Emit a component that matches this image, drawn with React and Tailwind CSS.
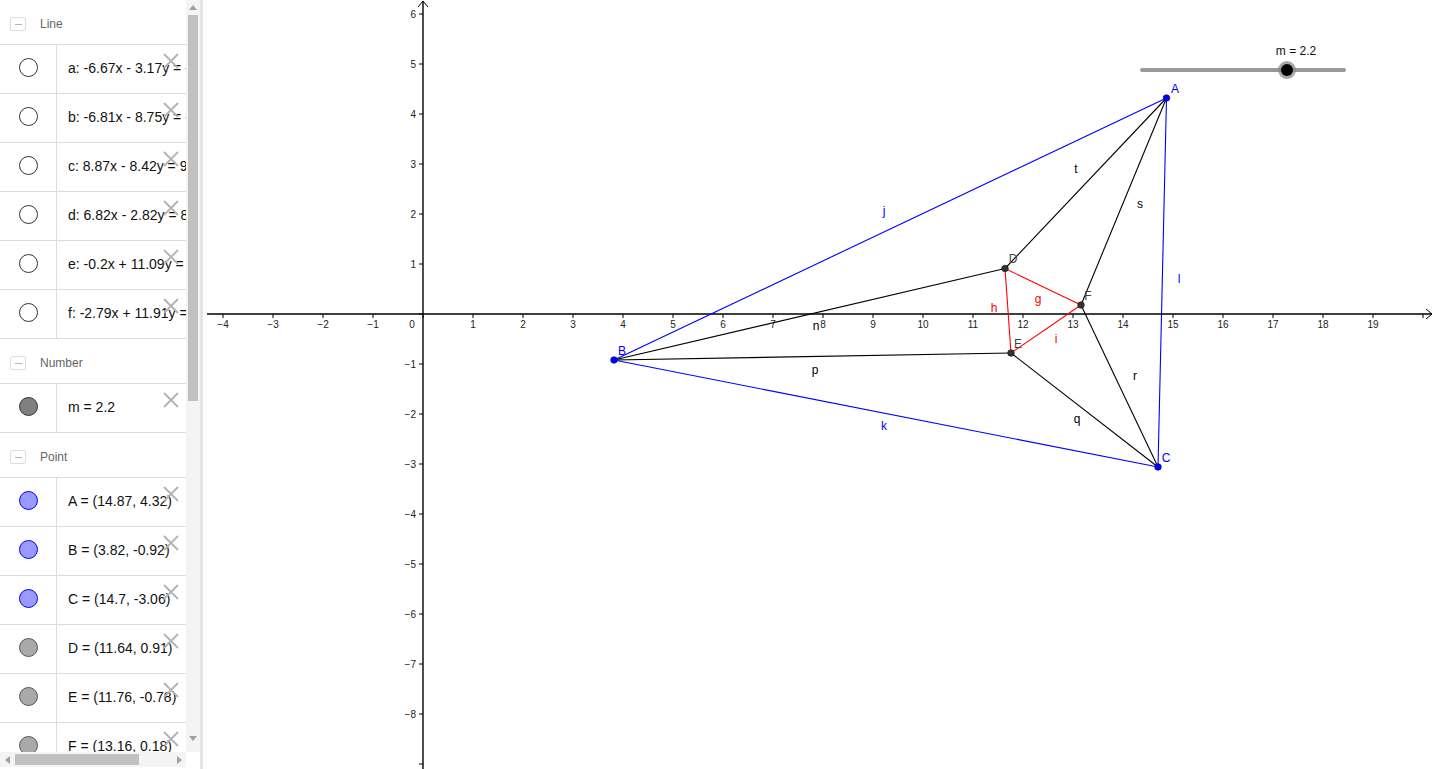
import React from 'react'

const font = { fontFamily: "'Liberation Sans', Arial, sans-serif" }

const groups = [
  {
    title: 'Line',
    items: [
      { text: 'a: -6.67x - 3.17y = -112.9', kind: 'open' },
      { text: 'b: -6.81x - 8.75y = -17.96', kind: 'open' },
      { text: 'c: 8.87x - 8.42y = 96.2', kind: 'open' },
      { text: 'd: 6.82x - 2.82y = 84.28', kind: 'open' },
      { text: 'e: -0.2x + 11.09y = 7.74', kind: 'open' },
      { text: 'f: -2.79x + 11.91y = -34.5', kind: 'open' },
    ],
  },
  {
    title: 'Number',
    items: [{ text: 'm = 2.2', kind: 'number' }],
  },
  {
    title: 'Point',
    items: [
      { text: 'A = (14.87, 4.32)', kind: 'free' },
      { text: 'B = (3.82, -0.92)', kind: 'free' },
      { text: 'C = (14.7, -3.06)', kind: 'free' },
      { text: 'D = (11.64, 0.91)', kind: 'dep' },
      { text: 'E = (11.76, -0.78)', kind: 'dep' },
      { text: 'F = (13.16, 0.18)', kind: 'dep' },
    ],
  },
]

const dotClass = {
  open: 'bg-white border-[#333]',
  number: 'bg-[#808080] border-[#333]',
  free: 'bg-[#9999ff] border-[#0000ff]',
  dep: 'bg-[#a9a9a9] border-[#555]',
}

function GroupHeader({ title }) {
  return (
    <div className="h-[45px] shrink-0 border-b border-[#dcdcdc] flex items-center pt-[4px]">
      <div className="ml-[10px] w-[16px] h-[14px] border border-[#dddddd] rounded-[2px] flex items-center justify-center">
        <div className="w-[7px] h-[1px] bg-[#b5b5b5]" />
      </div>
      <span className="ml-[14px] text-[12px] text-[#666]">{title}</span>
    </div>
  )
}

function Item({ text, kind }) {
  return (
    <div className="relative h-[49px] shrink-0 border-b border-[#dcdcdc] flex">
      <div className="w-[57px] shrink-0 border-r border-[#dcdcdc] flex items-center justify-center pb-[3px]">
        <div className={`w-[19px] h-[19px] rounded-full border ${dotClass[kind]}`} />
      </div>
      <div className="flex-1 flex items-center pl-[11px] pb-[2px] overflow-hidden whitespace-nowrap text-[14px] text-[#111]">
        {text}
      </div>
      <svg className="absolute left-[163px] top-[8px]" width="16" height="16" viewBox="0 0 16 16">
        <path d="M1 1L15 15M15 1L1 15" stroke="#b3b3b3" strokeWidth="1.8" />
      </svg>
    </div>
  )
}

function Tri({ dir }) {
  const pts = {
    up: '0,5 4,0 8,5',
    down: '0,0 8,0 4,5',
    left: '5,0 5,8 0,4',
    right: '0,0 0,8 5,4',
  }[dir]
  const w = dir === 'up' || dir === 'down' ? 8 : 5
  const h = dir === 'up' || dir === 'down' ? 5 : 8
  return (
    <svg width={w} height={h} viewBox={`0 0 ${w} ${h}`}>
      <polygon points={pts} fill="#a0a0a0" />
    </svg>
  )
}

function AlgebraPanel() {
  return (
    <div className="w-[200px] h-full shrink-0 flex flex-col">
      <div className="h-[752px] flex">
        <div className="w-[186px] h-full overflow-hidden flex flex-col">
          {groups.map(g => (
            <React.Fragment key={g.title}>
              <GroupHeader title={g.title} />
              {g.items.map(it => (
                <Item key={it.text} {...it} />
              ))}
            </React.Fragment>
          ))}
        </div>
        <div className="w-[14px] h-full bg-[#f4f4f4] flex flex-col items-center">
          <div className="h-[14px] flex items-center justify-center">
            <Tri dir="up" />
          </div>
          <div className="w-[10px] h-[386px] mt-[1px] bg-[#c1c1c1]" />
          <div className="flex-1" />
          <div className="h-[18px] flex items-start justify-center pt-[2px]">
            <Tri dir="down" />
          </div>
        </div>
      </div>
      <div className="h-[17px] flex">
        <div className="w-[186px] h-[15px] bg-[#f4f4f4] flex items-center">
          <div className="w-[14px] flex justify-center">
            <Tri dir="left" />
          </div>
          <div className="w-[124px] h-[11px] ml-[1px] bg-[#c1c1c1]" />
          <div className="flex-1" />
          <div className="w-[14px] flex justify-center">
            <Tri dir="right" />
          </div>
        </div>
        <div className="flex-1 bg-white" />
      </div>
    </div>
  )
}

const O = { x: 423, y: 314 }
const S = 50
const px = x => O.x + x * S
const py = y => O.y - y * S

const P = {
  A: [px(14.87), py(4.32)],
  B: [px(3.82), py(-0.92)],
  C: [px(14.7), py(-3.06)],
  D: [px(11.64), py(0.91)],
  E: [px(11.76), py(-0.78)],
  F: [px(13.16), py(0.18)],
}

const segs = [
  ['A', 'B', '#0000ff'],
  ['B', 'C', '#0000ff'],
  ['A', 'C', '#0000ff'],
  ['A', 'D', '#000'],
  ['A', 'F', '#000'],
  ['B', 'D', '#000'],
  ['B', 'E', '#000'],
  ['C', 'E', '#000'],
  ['C', 'F', '#000'],
  ['D', 'F', '#ff0000'],
  ['D', 'E', '#ff0000'],
  ['E', 'F', '#ff0000'],
]

const segLabels = [
  ['j', 884, 211, '#0000ff'],
  ['k', 884, 426, '#0000ff'],
  ['l', 1179, 279, '#0000ff'],
  ['t', 1076, 169, '#000'],
  ['s', 1140, 204, '#000'],
  ['n', 816, 326, '#000'],
  ['p', 815, 370, '#000'],
  ['q', 1077, 419, '#000'],
  ['r', 1135, 376, '#000'],
  ['h', 994, 308, '#ff0000'],
  ['g', 1038, 299, '#ff0000'],
  ['i', 1056, 339, '#ff0000'],
]

const ptLabels = [
  ['A', 1175, 89, '#0000ff'],
  ['B', 622, 351, '#0000ff'],
  ['C', 1166, 458, '#0000ff'],
  ['D', 1013, 259, '#444'],
  ['E', 1018, 344, '#444'],
  ['F', 1088, 296, '#444'],
]

function Graphics() {
  const xt = []
  for (let k = -4; k <= 20; k++) xt.push(k)
  const yt = []
  for (let k = 6; k >= -9; k--) yt.push(k)
  return (
    <div className="flex-1 h-full bg-white overflow-hidden">
      <svg width="1227" height="769" viewBox="207 0 1227 769" style={font}>
        {/* axes */}
        <line x1="207" y1="314" x2="1432" y2="314" stroke="#000" strokeWidth="1.4" />
        <polyline points="1426,309 1432,314 1426,319" fill="none" stroke="#000" strokeWidth="1" />
        <line x1="423" y1="1" x2="423" y2="769" stroke="#000" strokeWidth="1.4" />
        <polyline points="418,7 423,1 428,7" fill="none" stroke="#000" strokeWidth="1" />
        {xt.map(k => (
          <line key={'xt' + k} x1={px(k)} y1="314" x2={px(k)} y2="318" stroke="#000" strokeWidth="1" />
        ))}
        {yt.map(k => (
          <line key={'yt' + k} x1="419" y1={py(k)} x2="423" y2={py(k)} stroke="#000" strokeWidth="1" />
        ))}
        {xt
          .filter(k => k !== 0 && k !== 20)
          .map(k => (
            <text key={'xl' + k} x={px(k)} y="324" fontSize="10" fill="#222" textAnchor="middle" dominantBaseline="central">
              {k < 0 ? '\u2212' + -k : k}
            </text>
          ))}
        <text x="412" y="324" fontSize="10" fill="#222" textAnchor="middle" dominantBaseline="central">0</text>
        {yt
          .filter(k => k !== 0 && k !== -9)
          .map(k => (
            <text key={'yl' + k} x="416" y={py(k)} fontSize="10" fill="#222" textAnchor="end" dominantBaseline="central">
              {k < 0 ? '\u2212' + -k : k}
            </text>
          ))}

        {/* segments */}
        {segs.map(([a, b, c]) => (
          <line key={a + b} x1={P[a][0]} y1={P[a][1]} x2={P[b][0]} y2={P[b][1]} stroke={c} strokeWidth="1.1" />
        ))}
        {segLabels.map(([t, x, y, c]) => (
          <text key={'s' + t} x={x} y={y} fontSize="12" fill={c} textAnchor="middle" dominantBaseline="central">
            {t}
          </text>
        ))}

        {/* points */}
        {Object.entries(P).map(([k, [x, y]]) => (
          <circle
            key={k}
            cx={x}
            cy={y}
            r="3.3"
            fill={k === 'A' || k === 'B' || k === 'C' ? '#0000ff' : '#333'}
            stroke={k === 'A' || k === 'B' || k === 'C' ? '#000066' : '#111'}
            strokeWidth="0.6"
          />
        ))}
        {ptLabels.map(([t, x, y, c]) => (
          <text key={'p' + t} x={x} y={y} fontSize="12" fill={c} textAnchor="middle" dominantBaseline="central">
            {t}
          </text>
        ))}

        {/* slider */}
        <text x="1296" y="51" fontSize="12" fill="#111" textAnchor="middle" dominantBaseline="central">
          m = 2.2
        </text>
        <line x1="1142" y1="70" x2="1344" y2="70" stroke="#999" strokeWidth="4" strokeLinecap="round" />
        <circle cx="1287" cy="70" r="9" fill="#8a8a8a" opacity="0.75" />
        <circle cx="1287" cy="70" r="6" fill="#000" />
      </svg>
    </div>
  )
}

export default function App() {
  return (
    <div className="w-[1434px] h-[769px] flex overflow-hidden bg-white" style={font}>
      <AlgebraPanel />
      <div className="w-[7px] h-full shrink-0 border-l-[3px] border-[#e4e4e4] bg-white" />
      <Graphics />
    </div>
  )
}
